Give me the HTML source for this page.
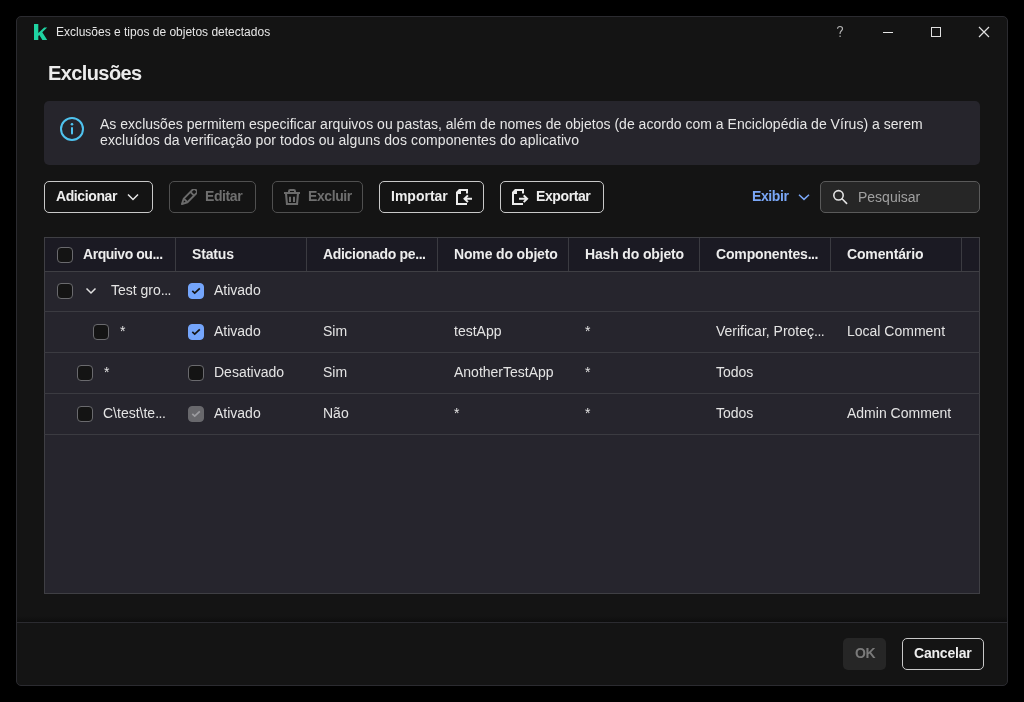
<!DOCTYPE html>
<html><head><meta charset="utf-8">
<style>
*{box-sizing:border-box;margin:0;padding:0}
html,body{width:1024px;height:702px;background:#000;overflow:hidden;font-family:"Liberation Sans",sans-serif;color:#e8e8e8}
body{-webkit-font-smoothing:antialiased}
.t{will-change:transform}
.abs{position:absolute}
#win{position:absolute;left:16px;top:16px;width:992px;height:670px;background:#141414;border:1px solid #2b2b30;border-radius:5px;overflow:hidden}
.t{position:absolute;white-space:nowrap;line-height:16px}
.b{font-weight:bold;letter-spacing:-0.4px}
.btn{position:absolute;height:32px;border:1px solid #c9c9c9;border-radius:5px;background:#141414}
.btn.dis{border-color:#505050}
.cb{position:absolute;width:16px;height:16px;border:1px solid #6a6a6e;border-radius:4px;background:#141414}
.cb.on{background:#74a5fb;border-color:#74a5fb}
.cb.gray{background:#68686c;border-color:#68686c}
.cb svg{position:absolute;left:1px;top:1px}
.hdr{position:absolute;left:44px;top:237px;width:936px;height:35px;background:#1b1a23;border:1px solid #3f3f44}
.vdiv{position:absolute;top:238px;width:1px;height:33px;background:#3b3b41}
.hd{font-size:14px;color:#ededed;letter-spacing:-0.15px}
.td{font-size:14px;color:#e4e4e4}
.dots{letter-spacing:-0.5px}
.row{position:absolute;left:44px;width:936px;height:1px;background:#3b3b41}
</style></head><body>
<div id="win"></div>

<!-- title bar -->
<svg class="abs" style="left:34px;top:24px" width="14" height="16" viewBox="0 0 14 16">
  <path d="M0 0H4.3V9L10.2 3.6H13.2L8.3 8.3L13.2 16H8.4L5.3 11L4.3 11.9V16H0Z" fill="#1fd3a2"/>
</svg>
<div class="t" style="left:56px;top:24px;font-size:12px;color:#e6e6e6">Exclusões e tipos de objetos detectados</div>
<svg class="abs" style="left:836px;top:25px" width="8" height="13" viewBox="0 0 8 13"><path d="M1.5 3.8C1.5 2.3 2.6 1.5 4 1.5C5.4 1.5 6.5 2.4 6.5 3.8C6.5 5.6 4.1 5.9 4.1 8.1V8.9" fill="none" stroke="#b4b4b4" stroke-width="1.15"/><rect x="3.45" y="10.6" width="1.3" height="1.3" fill="#b4b4b4"/></svg>
<div class="abs" style="left:883px;top:32px;width:10px;height:1px;background:#e6e6e6"></div>
<div class="abs" style="left:931px;top:27px;width:10px;height:10px;border:1px solid #e0e0e0"></div>
<svg class="abs" style="left:978px;top:26px" width="12" height="12" viewBox="0 0 12 12"><path d="M1 1L11 11M11 1L1 11" stroke="#e0e0e0" stroke-width="1.2"/></svg>

<!-- heading -->
<div class="t b" style="left:48px;top:62px;font-size:20px;line-height:22px;color:#ececec;letter-spacing:-0.6px">Exclusões</div>

<!-- info box -->
<div class="abs" style="left:44px;top:101px;width:936px;height:64px;background:#26252c;border-radius:5px"></div>
<svg class="abs" style="left:60px;top:117px" width="24" height="24" viewBox="0 0 24 24">
  <circle cx="12" cy="12" r="11" fill="none" stroke="#4fc3ef" stroke-width="2"/>
  <circle cx="12" cy="7.3" r="1.3" fill="#4fc3ef"/>
  <rect x="11" y="10" width="2" height="7.5" rx="1" fill="#4fc3ef"/>
</svg>
<div class="t" style="left:100px;top:116px;font-size:14px;color:#e6e6e6;letter-spacing:0.02px">As exclusões permitem especificar arquivos ou pastas, além de nomes de objetos (de acordo com a Enciclopédia de Vírus) a serem</div>
<div class="t" style="left:100px;top:132px;font-size:14px;color:#e6e6e6;letter-spacing:0.09px">excluídos da verificação por todos ou alguns dos componentes do aplicativo</div>

<!-- toolbar -->
<div class="btn" style="left:44px;top:181px;width:109px"></div>
<div class="t b" style="left:56px;top:188px;font-size:14px;color:#eee">Adicionar</div>
<svg class="abs" style="left:127px;top:193px" width="12" height="8" viewBox="0 0 12 8"><path d="M1 1.5l5 5 5-5" fill="none" stroke="#e8e8e8" stroke-width="1.5"/></svg>

<div class="btn dis" style="left:169px;top:181px;width:87px"></div>
<svg class="abs" style="left:181px;top:189px" width="16" height="16" viewBox="0 0 16 16">
<g transform="translate(8,8) rotate(-45)" fill="none" stroke="#6b6b6b" stroke-width="1.9" stroke-linejoin="round">
<path d="M-4.8 -2.6 H8 a1.8 1.8 0 0 1 1.8 1.8 V0.8 a1.8 1.8 0 0 1 -1.8 1.8 H-4.8 L-10 0 Z"/>
<path d="M4.6 -2.6 V2.6 M-4.8 -2.6 V2.6"/>
</g></svg>
<div class="t b" style="left:205px;top:188px;font-size:14px;color:#6f6f6f">Editar</div>

<div class="btn dis" style="left:272px;top:181px;width:91px"></div>
<svg class="abs" style="left:284px;top:189px" width="16" height="16" viewBox="0 0 16 16">
<g fill="#6b6b6b" fill-rule="evenodd">
<path d="M0 3H16V5H0Z"/>
<path d="M4 3.2V2.2A2.2 2.2 0 0 1 6.2 0H9.8A2.2 2.2 0 0 1 12 2.2V3.2H10V2H6V3.2Z"/>
<path d="M1 5H15L14 16H2ZM3.1 5L3.9 14H12.1L12.9 5Z"/>
<path d="M5 7.7H7V13H5ZM9 7.7H11V13H9Z"/>
</g></svg>
<div class="t b" style="left:308px;top:188px;font-size:14px;color:#6f6f6f">Excluir</div>

<div class="btn" style="left:379px;top:181px;width:105px"></div>
<div class="t b" style="left:391px;top:188px;font-size:14px;color:#eee;letter-spacing:0">Importar</div>
<svg class="abs" style="left:456px;top:189px" width="17" height="16" viewBox="0 0 17 16">
<path d="M0 3L3 0H12V4.6H10V2H5V5H2V14H11V16H0Z" fill="#ececec"/>
<path d="M16 9.75H8.6M11.9 6.4L8.5 9.75L11.9 13.1" fill="none" stroke="#ececec" stroke-width="2"/>
</svg>

<div class="btn" style="left:500px;top:181px;width:104px"></div>
<svg class="abs" style="left:512px;top:189px" width="17" height="16" viewBox="0 0 17 16">
<path d="M0 3L3 0H12V4.6H10V2H5V5H2V14H11V16H0Z" fill="#ececec"/>
<path d="M7 9.75H15M11.7 6.4L15.1 9.75L11.7 13.1" fill="none" stroke="#ececec" stroke-width="2"/>
</svg>
<div class="t b" style="left:536px;top:188px;font-size:14px;color:#eee">Exportar</div>

<div class="t b" style="left:752px;top:188px;font-size:14px;color:#7aa7f7">Exibir</div>
<svg class="abs" style="left:797px;top:193px" width="14" height="8" viewBox="0 0 14 8"><path d="M2 1.8l5 4.6 5-4.6" fill="none" stroke="#7aa7f7" stroke-width="1.5"/></svg>

<div class="abs" style="left:820px;top:181px;width:160px;height:32px;background:#262626;border:1px solid #5a5a5a;border-radius:5px"></div>
<svg class="abs" style="left:830px;top:186px" width="20" height="20" viewBox="0 0 20 20">
<circle cx="8.5" cy="9.3" r="4.7" fill="none" stroke="#e2e2e2" stroke-width="1.6"/>
<path d="M12 12.8L16.6 17.4" stroke="#e2e2e2" stroke-width="1.6" stroke-linecap="round"/>
</svg>
<div class="t" style="left:858px;top:189px;font-size:14px;color:#a0a0a0">Pesquisar</div>

<!-- table -->
<div class="abs" style="left:44px;top:237px;width:936px;height:357px;background:#26252d;border:1px solid #3f3f44"></div>
<div class="hdr"></div>

<!-- table header -->
<div class="vdiv" style="left:175px"></div>
<div class="vdiv" style="left:306px"></div>
<div class="vdiv" style="left:437px"></div>
<div class="vdiv" style="left:568px"></div>
<div class="vdiv" style="left:699px"></div>
<div class="vdiv" style="left:830px"></div>
<div class="vdiv" style="left:961px"></div>
<div class="cb" style="left:57px;top:247px"></div>
<div class="t b hd" style="left:83px;top:246px;letter-spacing:-0.45px">Arquivo ou<span class="dots">...</span></div>
<div class="t b hd" style="left:192px;top:246px">Status</div>
<div class="t b hd" style="left:323px;top:246px;letter-spacing:-0.32px">Adicionado pe<span class="dots">...</span></div>
<div class="t b hd" style="left:454px;top:246px">Nome do objeto</div>
<div class="t b hd" style="left:585px;top:246px">Hash do objeto</div>
<div class="t b hd" style="left:716px;top:246px">Componentes<span class="dots">...</span></div>
<div class="t b hd" style="left:847px;top:246px">Comentário</div>

<!-- row dividers -->
<div class="row" style="top:311px"></div>
<div class="row" style="top:352px"></div>
<div class="row" style="top:393px"></div>
<div class="row" style="top:434px"></div>

<!-- row 1 -->
<div class="cb" style="left:57px;top:283px"></div>
<svg class="abs" style="left:85px;top:286px" width="12" height="10" viewBox="0 0 12 10"><path d="M1.5 2.5l4.5 4.5 4.5-4.5" fill="none" stroke="#e0e0e0" stroke-width="1.5"/></svg>
<div class="t td" style="left:111px;top:282px">Test gro<span class="dots">...</span></div>
<div class="cb on" style="left:188px;top:283px"><svg width="16" height="16" viewBox="0 0 16 16" style="position:absolute;left:-1px;top:-1px"><path d="M4.3 7.9L6.7 10.1L11.8 5.3" fill="none" stroke="#141414" stroke-width="1.7"/></svg></div>
<div class="t td" style="left:214px;top:282px">Ativado</div>

<!-- row 2 -->
<div class="cb" style="left:93px;top:324px"></div>
<div class="t td" style="left:120px;top:323px">*</div>
<div class="cb on" style="left:188px;top:324px"><svg width="16" height="16" viewBox="0 0 16 16" style="position:absolute;left:-1px;top:-1px"><path d="M4.3 7.9L6.7 10.1L11.8 5.3" fill="none" stroke="#141414" stroke-width="1.7"/></svg></div>
<div class="t td" style="left:214px;top:323px">Ativado</div>
<div class="t td" style="left:323px;top:323px">Sim</div>
<div class="t td" style="left:454px;top:323px">testApp</div>
<div class="t td" style="left:585px;top:323px">*</div>
<div class="t td" style="left:716px;top:323px">Verificar, Proteç<span class="dots">...</span></div>
<div class="t td" style="left:847px;top:323px">Local Comment</div>

<!-- row 3 -->
<div class="cb" style="left:77px;top:365px"></div>
<div class="t td" style="left:104px;top:364px">*</div>
<div class="cb" style="left:188px;top:365px"></div>
<div class="t td" style="left:214px;top:364px">Desativado</div>
<div class="t td" style="left:323px;top:364px">Sim</div>
<div class="t td" style="left:454px;top:364px">AnotherTestApp</div>
<div class="t td" style="left:585px;top:364px">*</div>
<div class="t td" style="left:716px;top:364px">Todos</div>

<!-- row 4 -->
<div class="cb" style="left:77px;top:406px"></div>
<div class="t td" style="left:103px;top:405px">C\test\te<span class="dots">...</span></div>
<div class="cb gray" style="left:188px;top:406px"><svg width="16" height="16" viewBox="0 0 16 16" style="position:absolute;left:-1px;top:-1px"><path d="M4.3 7.9L6.7 10.1L11.8 5.3" fill="none" stroke="#9c9ca0" stroke-width="1.7"/></svg></div>
<div class="t td" style="left:214px;top:405px">Ativado</div>
<div class="t td" style="left:323px;top:405px">Não</div>
<div class="t td" style="left:454px;top:405px">*</div>
<div class="t td" style="left:585px;top:405px">*</div>
<div class="t td" style="left:716px;top:405px">Todos</div>
<div class="t td" style="left:847px;top:405px">Admin Comment</div>


<!-- footer -->
<div class="abs" style="left:17px;top:616px;width:990px;height:6px;background:linear-gradient(rgba(0,0,0,0),rgba(0,0,0,0.3))"></div>
<div class="abs" style="left:17px;top:622px;width:990px;height:1px;background:#2b2b30"></div>
<div class="abs" style="left:843px;top:638px;width:43px;height:32px;background:#262626;border-radius:5px"></div>
<div class="t b" style="left:855px;top:645px;font-size:14px;color:#7a7a7a">OK</div>
<div class="btn" style="left:902px;top:638px;width:82px"></div>
<div class="t b" style="left:914px;top:645px;font-size:14px;color:#eee;letter-spacing:-0.2px">Cancelar</div>
</body></html>
